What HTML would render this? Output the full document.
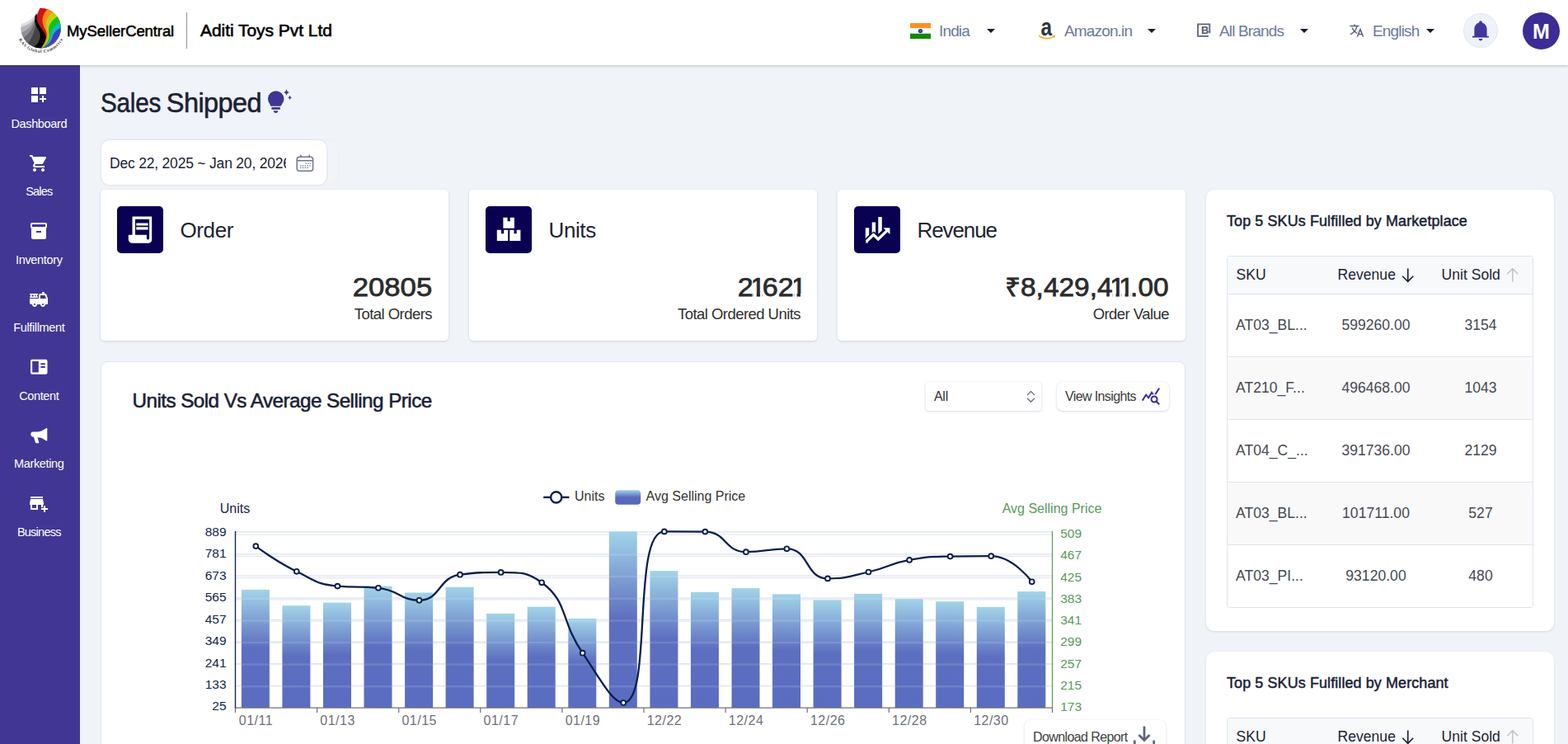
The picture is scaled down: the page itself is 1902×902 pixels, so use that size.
<!DOCTYPE html>
<html lang="en">
<head>
<meta charset="utf-8">
<title>Sales Shipped</title>
<style>
*{box-sizing:border-box;margin:0;padding:0}
html,body{width:1902px;height:902px;overflow:hidden;background:#f0f3f8;font-family:"Liberation Sans",sans-serif;color:#1a1f36}
.abs{position:absolute}
.t{position:absolute;white-space:nowrap;line-height:1}
#header{position:absolute;left:0;top:0;width:1902px;height:79px;background:#fff;box-shadow:0 1px 3px rgba(40,45,60,.26);z-index:5}
#sidebar{position:absolute;left:0;top:79px;width:97px;height:823px;background:#413693;z-index:4}
.nav{position:absolute;left:0;width:94.6px;text-align:center;color:#fff;font-size:14.5px;line-height:1;margin-top:-.7px;letter-spacing:-.35px;white-space:nowrap}
.card{position:absolute;background:#fff;border-radius:5px;box-shadow:0 1px 3px rgba(40,45,60,.16)}
.ibox{position:absolute;left:20px;top:20px;width:56px;height:57px;background:#0a0052;border-radius:5px}
.hsel{font-size:19px;color:#6c7a9c;letter-spacing:-.85px;top:28px !important}
.caret{position:absolute;top:35px;width:0;height:0;border-left:5px solid transparent;border-right:5px solid transparent;border-top:5.5px solid #171c2e}
.cval{font-size:31px;color:#2b2b2b;-webkit-text-stroke:.75px #2b2b2b;letter-spacing:0;transform:scaleX(1.12);transform-origin:right center}
.cval i{font-style:normal;display:inline-block;position:relative;width:10.400px;height:31px;overflow:hidden;vertical-align:top;text-indent:-3.300px;margin:0 -.2px}
.cval i::before,.cval i::after{content:"";position:absolute;bottom:1px;height:7px;background:#fff}
.cval i::before{left:0;width:3.700px}
.cval i::after{left:7.700px;width:3px}
.csub{font-size:18.500px;color:#2f2f2f;letter-spacing:-.55px}
.panel{position:absolute;background:#fff;border-radius:10px;box-shadow:0 1px 3px rgba(60,70,95,.16)}
.ptitle{font-size:18px;color:#1a1f36;-webkit-text-stroke:.5px #1a1f36;letter-spacing:.08px}
.tbl{position:absolute;border:1px solid #dde3ee;border-radius:4px;overflow:hidden;background:#fff}
.th{position:absolute;left:0;top:0;width:100%;height:45.500px;background:#f8f9fa;border-bottom:1px solid #dde1e8}
.thc{font-size:17.600px;color:#1a1f36;line-height:20px;margin-top:-2px}
.tr{position:absolute;left:0;width:100%;height:76px;border-bottom:1px solid #dfe2e8;background:#fff}
.tr.alt{background:#f9f9fa}
.tdc{font-size:17.600px;color:#464a52;line-height:20px;margin-top:-.1px}
.ccard{position:absolute;background:#fff;border-radius:8px;box-shadow:0 0 0 1px rgba(222,227,239,.9),0 0 2px rgba(140,155,190,.18)}
.selbox{background:#fff;box-shadow:0 1px 3px rgba(120,135,170,.3),0 0 1px rgba(120,135,170,.12)}
</style>
</head>
<body>
<div id="header">
<svg class="abs" style="left:15px;top:3px" width="70" height="70" viewBox="0 0 70 70">
<defs><clipPath id="lc"><circle cx="445" cy="400" r="312"/></clipPath>
<linearGradient id="lw" x1="0" y1="0" x2="1" y2="1"><stop offset="0" stop-color="#fff"/><stop offset="1" stop-color="#fff" stop-opacity="0"/></linearGradient></defs>
<g transform="scale(0.07761)"><g clip-path="url(#lc)">
<rect x="100" y="60" width="700" height="700" fill="#d2d3d9"/>
<path d="M345 205C330 280 290 340 100 400V760H500V205Z" fill="#b4b5bb"/>
<path d="M350 215C345 320 270 420 120 480V760H500V215Z" fill="#8f8f95"/>
<path d="M355 225C355 350 300 470 160 560V760H500V225Z" fill="#6a6a6f"/>
<path d="M360 235C370 380 350 500 240 640V760H500V235Z" fill="#444447"/>
<path d="M370 185C320 260 360 350 420 450C460 540 420 640 330 700L460 720L560 560L460 300L400 190Z" fill="#000"/>
<path d="M385 200C360 290 440 380 500 470C550 550 510 640 450 705L800 760V60H440Z" fill="#cd1417"/>
<path d="M545 105C460 200 450 300 500 400C550 480 560 560 455 705L800 760V60Z" fill="#ff8d17"/>
<path d="M625 155C530 240 500 330 545 430C575 520 560 600 460 706L800 760V100Z" fill="#bcd411"/>
<path d="M695 225C590 300 555 380 570 470C585 560 560 630 465 707L800 760V200Z" fill="#12c21c"/>
<path d="M745 305C650 360 610 430 600 500C595 580 560 650 470 708L800 760V300Z" fill="#12b9c4"/>
<path d="M760 395C690 420 640 480 625 540C605 610 560 670 475 709L800 760V390Z" fill="#3c40c6"/>
<path d="M740 535C680 590 620 640 560 680L480 712L800 760V530Z" fill="#a13cb4"/>
<path d="M100 60H445C400 140 360 200 300 250C250 290 190 320 100 345Z" fill="#fff"/>
<path d="M100 330C200 310 290 260 350 195L370 260C300 330 200 370 100 380Z" fill="url(#lw)" opacity=".6"/>
</g></g>
<path id="lt" d="M7.84 44.64A29.96 29.96 0 0 0 63.47 38.80" fill="none"/>
<text font-family="Liberation Serif,serif" font-size="5.400" font-weight="700" fill="#3a3a3a" letter-spacing=".62"><textPath href="#lt" startOffset="0">KAS Global Commerce</textPath></text>
</svg>
<div class="t" id="h-brand" style="left:81px;top:28.500px;font-size:18.5px;font-weight:400;-webkit-text-stroke:.55px #000;color:#000;letter-spacing:-.1px">MySellerCentral</div>
<div class="abs" style="left:226px;top:15px;width:1px;height:44px;background:#8b90a3"></div>
<div class="t" id="h-co" style="left:243px;top:26px;font-size:21px;font-weight:400;-webkit-text-stroke:.6px #000;color:#000;letter-spacing:-.05px">Aditi Toys Pvt Ltd</div>

<svg class="abs" style="left:1104px;top:28px" width="25" height="19" viewBox="0 0 25 19"><rect width="25" height="6.3" fill="#ff9122"/><rect y="6.3" width="25" height="6.4" fill="#fff"/><rect y="12.7" width="25" height="6.3" fill="#138808"/><circle cx="12.5" cy="9.5" r="2.6" fill="#2a2f9e"/><circle cx="12.5" cy="9.5" r="1" fill="#6a6fd0"/></svg>
<div class="t hsel" id="h-india" style="left:1139px;top:28px">India</div>
<div class="caret" style="left:1197px"></div>

<svg class="abs" style="left:1259px;top:26px" width="22" height="23" viewBox="0 0 22 23">
<text x="0" y="0" transform="translate(3.6 16.8) scale(.84 1)" font-family="Liberation Sans,sans-serif" font-weight="700" font-size="29" fill="#30333c">a</text>
<path d="M1.5 17.6 C6 21.6 14 21.8 19.6 18.2" fill="none" stroke="#f7a41c" stroke-width="1.3" stroke-linecap="round"/><path d="M17.6 17.2 L20.4 17 L19.6 19.8" fill="none" stroke="#f7a41c" stroke-width="1.1"/></svg>
<div class="t hsel" id="h-amz" style="left:1291px;top:28px">Amazon.in</div>
<div class="caret" style="left:1392px"></div>

<svg class="abs" style="left:1452px;top:28px" width="18" height="18" viewBox="0 0 18 18"><path d="M1.100 .5V16.700M.2 1.400H16.200M15.300 .5V11.400M.2 15.800H14" fill="none" stroke="#5d6479" stroke-width="1.800"/><path d="M13.600 10.600h3.400l-1.700 1.900z" fill="#5d6479"/><text x="5.100" y="13.100" font-family="Liberation Sans,sans-serif" font-weight="700" font-size="12.800" fill="#555b70">B</text></svg>
<div class="t hsel" id="h-brands" style="left:1479px;top:28px">All Brands</div>
<div class="caret" style="left:1577px"></div>

<svg class="abs" style="left:1637px;top:29px" width="18" height="16" viewBox="0 0 18 16"><g fill="none" stroke="#5d6479" stroke-width="1.5" stroke-linecap="round"><path d="M1 2.6 H11"/><path d="M6 1 V2.6"/><path d="M9 2.8 C8 7 5 10.5 1.6 12.4"/><path d="M3.4 5.2 C4.6 8 6.6 10 8.6 11.2"/><path d="M9.6 15 L13 6.6 L16.4 15"/><path d="M10.8 12.4 H15.2"/></g></svg>
<div class="t hsel" id="h-eng" style="left:1665px;top:28px">English</div>
<div class="caret" style="left:1730px"></div>

<div class="abs" style="left:1775px;top:16px;width:42px;height:42px;border-radius:50%;background:#eff2f9;border:1px solid #e2e5f3"></div>
<svg class="abs" style="left:1785px;top:24px" width="22" height="26" viewBox="0 0 22 26"><path d="M11 1.2 a1.9 1.9 0 0 1 1.9 1.9 v.5 C16.4 4.6 18.6 7.6 18.6 11.4 V19.8 H21 V21.6 H1 V19.8 H3.4 V11.4 C3.4 7.6 5.6 4.6 9.1 3.6 v-.5 A1.9 1.9 0 0 1 11 1.2Z" fill="#42379a"/><path d="M8.6 23 H13.4 A2.4 2.4 0 0 1 8.6 23Z" fill="#42379a"/></svg>
<div class="abs" style="left:1847px;top:15px;width:45px;height:45px;border-radius:50%;background:#3b2c96"></div>
<div class="t" id="h-m" style="left:1847px;width:45px;text-align:center;top:26px;font-size:25px;font-weight:700;color:#fff">M</div>
</div>
<div id="sidebar">
<svg class="abs" style="left:35px;top:24.0px" width="24" height="24" viewBox="0 0 24 24" fill="#fff"><path d="M3 3h8v8H3zm10 0h8v8h-8zM3 13h8v8H3zm15 0h-2v3h-3v2h3v3h2v-3h3v-2h-3z"/></svg>
<div class="nav" id="nav0" style="top:64.5px">Dashboard</div>
<svg class="abs" style="left:35px;top:106.5px" width="24" height="24" viewBox="0 0 24 24" fill="#fff"><path d="M7 18c-1.1 0-1.990.9-1.990 2S5.900 22 7 22s2-.9 2-2-.9-2-2-2zM1 2v2h2l3.600 7.590-1.350 2.450c-.16.28-.25.61-.25.96 0 1.100.9 2 2 2h12v-2H7.420c-.14 0-.25-.11-.25-.25l.03-.12.9-1.630h7.450c.75 0 1.410-.41 1.750-1.030l3.580-6.490c.08-.14.12-.31.12-.48 0-.55-.45-1-1-1H5.210l-.94-2H1zm16 16c-1.100 0-1.990.9-1.990 2s.89 2 1.990 2 2-.9 2-2-.9-2-2-2z"/></svg>
<div class="nav" id="nav1" style="top:147.0px;letter-spacing:-.8px">Sales</div>
<svg class="abs" style="left:35px;top:189.0px" width="24" height="24" viewBox="0 0 24 24" fill="#fff"><path d="M20 2H4c-1 0-2 .9-2 2v3.010c0 .72.43 1.340 1 1.690V20c0 1.100 1.100 2 2 2h14c.9 0 2-.9 2-2V8.700c.57-.35 1-.97 1-1.690V4c0-1.100-1-2-2-2zm-5 12H9v-2h6v2zm5-7H4V4h16v3z"/></svg>
<div class="nav" id="nav2" style="top:229.5px">Inventory</div>
<svg class="abs" style="left:35px;top:271.5px" width="24" height="24" viewBox="0 0 24 24" fill="#fff"><path d="M22.900 10.690l-1.440-4.320C21.180 5.550 20.420 5 19.560 5H19V4c0-.55-.45-1-1-1h-1c-.55 0-1 .45-1 1v1h-2c-1.100 0-2 .9-2 2v4H1v5c0 1.100.9 2 2 2h1c0 1.660 1.340 3 3 3s3-1.340 3-3h4c0 1.660 1.340 3 3 3s3-1.340 3-3h2c.55 0 1-.45 1-1v-5.680c0-.21-.03-.42-.1-.63zM7 19c-.55 0-1-.45-1-1s.45-1 1-1 1 .45 1 1-.45 1-1 1zm10 0c-.55 0-1-.45-1-1s.45-1 1-1 1 .45 1 1-.45 1-1 1zM14 11V7h5.560l1.330 4H14z"/><path d="M11 8.500h-1v-2h1V5H1v1.500h1v2H1V10h10V8.500zm-5.250 0H3.500v-2h2.250v2zm2.750 0H7.250v-2H8.500v2z"/></svg>
<div class="nav" id="nav3" style="top:312.0px">Fulfillment</div>
<svg class="abs" style="left:35px;top:354.0px" width="24" height="24" viewBox="0 0 24 24" fill="#fff"><path fill-rule="evenodd" d="M4 2.800h16.500a2 2 0 0 1 2 2v14a2 2 0 0 1-2 2H4a2 2 0 0 1-2-2v-14a2 2 0 0 1 2-2zM4.200 5v13.600h7.600V5zM14.400 7.200v2h5.400v-2zM14.400 11v2h5.400v-2z"/></svg>
<div class="nav" id="nav4" style="top:394.5px">Content</div>
<svg class="abs" style="left:35px;top:436.5px" width="24" height="24" viewBox="0 0 24 24" fill="#fff"><path d="M22.200 2.600c.5-.3 1.100 0 1.100.6v15.200c0 .6-.6.9-1.100.6l-6.200-3.700-5.300-.9 1.900 6.500c.2.600-.3 1.200-.9 1.200h-2.600c-.4 0-.8-.3-.9-.7l-2.300-7.500h-.9c-1.700 0-3-1.300-3-3v-.6c0-1.700 1.300-3 3-3h6.500l4.500-1z" transform="translate(.4 .6) scale(.94)"/></svg>
<div class="nav" id="nav5" style="top:477.0px">Marketing</div>
<svg class="abs" style="left:35px;top:519.0px" width="24" height="24" viewBox="0 0 24 24" fill="#fff"><path d="M15 17h2v-3h1v-2l-1-5H2l-1 5v2h1v6h9v-6h4v3zm-6 1H4v-4h5v4zM2 4h15v2H2z"/><path d="M20 18v-3h-2v3h-3v2h3v3h2v-3h3v-2z"/></svg>
<div class="nav" id="nav6" style="top:559.5px;letter-spacing:-.75px">Business</div>
</div>
<div id="main">
<div class="t med" id="title" style="left:121.500px;top:109px;font-size:32.5px;color:#1a1f36;letter-spacing:-1.120px;-webkit-text-stroke:.55px #1a1f36"><span style="display:inline-block;letter-spacing:-.3px;transform:scaleX(.915);transform-origin:left center;margin-right:-7.400px">Sales</span> <span style="letter-spacing:-.6px">Shipped</span></div>
<svg class="abs" style="left:322px;top:105px" width="36" height="36" viewBox="0 0 36 36" fill="#403594">
<path d="M5.160 21A9.700 9.700 0 1 1 20.240 21L18.400 23.700H6.450Z"/>
<rect x="7.400" y="24.900" width="10.500" height="2.900" rx=".3"/>
<path d="M9.900 29.200h5.300a2.650 2.700 0 0 1-5.300 0z"/>
<path d="M25.500 3.300Q26.100 6.400 28.900 7Q26.100 7.600 25.500 10.700Q24.900 7.600 22.100 7Q24.900 6.400 25.500 3.300Z"/>
<path d="M29.550 10.800Q30 13 32.100 13.350Q30 13.800 29.550 15.900Q29.100 13.800 27 13.350Q29.100 13 29.550 10.800Z"/>
</svg>

<div class="abs" style="left:123px;top:170px;width:287px;height:54px;border-radius:10px;background:#f1f4f9;box-shadow:0 0 1px rgba(180,190,215,.35)"></div>
<div class="abs" style="left:123px;top:170px;width:273px;height:54px;border-radius:9px;background:#fff;box-shadow:0 0 2px rgba(150,165,200,.55)"></div>
<div class="t" id="date" style="left:133px;top:188px;width:213.500px;overflow:hidden;font-size:17.5px;line-height:20px;color:#1a1f36;letter-spacing:-.2px">Dec 22, 2025 ~ Jan 20, 2026</div>
<svg class="abs" style="left:358px;top:186px" width="24" height="24" viewBox="0 0 24 24" fill="none" stroke="#6f7893" stroke-width="1.500"><rect x="2.200" y="4.200" width="19.400" height="17" rx="3"/><path d="M2.200 8.800h19.400M6.800 1.600v3M17.200 1.600v3" /><g stroke-width="1.300" stroke-dasharray="1.500 1.300"><path d="M12.400 12.200h6.500M6 14.800h13M6 17.400h10"/></g></svg>
<div class="card" style="left:122px;top:230px;width:422px;height:183px">
<div class="ibox"><svg class="abs" style="left:0;top:0" width="56" height="57" viewBox="0 0 56 57"><path fill-rule="evenodd" fill="#fff" d="M18.500 12.400H42.200V40.500a4.300 4.300 0 0 1-4.300 4.300H18.300a4.500 4.500 0 0 1-4.500-4.500V34.800H18.500zM22 15.700V34.800H35.900V39a1.600 1.600 0 0 0 3.200 0V15.700zM23.300 20.400H37.600V23.600H23.300zM23.300 25.300H37.600V28.500H23.300z"/></svg></div>
<div class="t" id="c-order-n" style="left:96.500px;top:36px;font-size:26px;color:#1f2333;letter-spacing:-.4px">Order</div>
<div class="t cval" id="c-order-v" style="right:19.500px;top:103px">20805</div>
<div class="t csub" id="c-order-s" style="right:20px;top:141.700px">Total Orders</div>
</div>
<div class="card" style="left:569px;top:230px;width:422px;height:183px">
<div class="ibox"><svg class="abs" style="left:0;top:0" width="56" height="57" viewBox="0 0 56 57" fill="#fff"><path d="M21.400 13.800h5.200v4.400h3.200v-4.400h5.100v12.900H21.400zM13.800 28.800h5.200v4.400h3.200v-4.400h5v13.100H13.800zM29.300 28.800h5.200v4.400h3.200v-4.400h4.700v13.100H29.300z"/></svg></div>
<div class="t" id="c-units-n" style="left:96.500px;top:36px;font-size:26px;color:#1f2333;letter-spacing:-.4px">Units</div>
<div class="t cval" id="c-units-v" style="right:17.500px;top:103px;transform:scaleX(1.100)">2<i>1</i>62<i>1</i></div>
<div class="t csub" id="c-units-s" style="right:20px;top:141.700px">Total Ordered Units</div>
</div>
<div class="card" style="left:1016px;top:230px;width:422px;height:183px">
<div class="ibox"><svg class="abs" style="left:0;top:0" width="56" height="57" viewBox="0 0 56 57" fill="#fff"><path d="M13.800 26.300h4.400v8.500l-4.400 4.300zM21.700 19.500h4.400v13.100l-2.300-2.100-2.100 1.900zM29.300 13h4.500v16.500l-4.500 4.300z"/><path d="M15 42.800L23.500 34.500l5.800 5.500 11-10.600" fill="none" stroke="#fff" stroke-width="3.400"/><path d="M35.400 26.300h8.100v7.800z"/><path d="M13.900 44.400h3.500l-2.500-2.700z"/></svg></div>
<div class="t" id="c-rev-n" style="left:96.500px;top:36px;font-size:26px;color:#1f2333;letter-spacing:-1.1px">Revenue</div>
<div class="t cval" id="c-rev-v" style="right:20px;top:103px;transform:scaleX(1.078)">₹8,429,4<i>1</i><i>1</i>.00</div>
<div class="t csub" id="c-rev-s" style="right:20px;top:141.700px">Order Value</div>
</div>
<div class="ccard" style="left:123px;top:439px;width:1314px;height:480px">
<svg class="abs" id="chart" style="left:0;top:0" width="1316" height="464" viewBox="0 0 1316 464" font-family="Liberation Sans, sans-serif">
<defs><linearGradient id="bg" x1="0" y1="0" x2="0" y2="1"><stop offset="0" stop-color="#9fd3e8"/><stop offset=".5" stop-color="#576abe"/><stop offset="1" stop-color="#5568be"/></linearGradient></defs>
<path d="M162.5 206.1H1153.5M162.5 232.7H1153.5M162.5 259.3H1153.5M162.5 285.9H1153.5M162.5 312.6H1153.5M162.5 339.2H1153.5M162.5 365.8H1153.5M162.5 392.4H1153.5" stroke="#dfe5f1" stroke-width="1.500" fill="none"/>
<path d="M162.5 209.2H1153.5M162.5 235.4H1153.5M162.5 261.7H1153.5M162.5 287.9H1153.5M162.5 314.1H1153.5M162.5 340.3H1153.5M162.5 366.5H1153.5M162.5 392.8H1153.5" stroke="#e3e8f3" stroke-width="1.200" fill="none"/>
<rect x="169.9" y="275.9" width="34" height="143.1" fill="url(#bg)" opacity=".97"/>
<rect x="219.4" y="295.2" width="34" height="123.8" fill="url(#bg)" opacity=".97"/>
<rect x="269.0" y="291.6" width="34" height="127.4" fill="url(#bg)" opacity=".97"/>
<rect x="318.5" y="271.6" width="34" height="147.4" fill="url(#bg)" opacity=".97"/>
<rect x="368.1" y="279.5" width="34" height="139.5" fill="url(#bg)" opacity=".97"/>
<rect x="417.6" y="272.7" width="34" height="146.3" fill="url(#bg)" opacity=".97"/>
<rect x="467.2" y="304.8" width="34" height="114.2" fill="url(#bg)" opacity=".97"/>
<rect x="516.7" y="296.6" width="34" height="122.4" fill="url(#bg)" opacity=".97"/>
<rect x="566.3" y="310.9" width="34" height="108.1" fill="url(#bg)" opacity=".97"/>
<rect x="615.8" y="205.4" width="34" height="213.6" fill="url(#bg)" opacity=".97"/>
<rect x="665.4" y="253.1" width="34" height="165.9" fill="url(#bg)" opacity=".97"/>
<rect x="714.9" y="278.8" width="34" height="140.2" fill="url(#bg)" opacity=".97"/>
<rect x="764.5" y="274.1" width="34" height="144.9" fill="url(#bg)" opacity=".97"/>
<rect x="814.0" y="281.3" width="34" height="137.7" fill="url(#bg)" opacity=".97"/>
<rect x="863.6" y="288.4" width="34" height="130.6" fill="url(#bg)" opacity=".97"/>
<rect x="913.1" y="280.9" width="34" height="138.1" fill="url(#bg)" opacity=".97"/>
<rect x="962.7" y="287.0" width="34" height="132.0" fill="url(#bg)" opacity=".97"/>
<rect x="1012.2" y="290.2" width="34" height="128.8" fill="url(#bg)" opacity=".97"/>
<rect x="1061.8" y="297.0" width="34" height="122.0" fill="url(#bg)" opacity=".97"/>
<rect x="1111.3" y="278.1" width="34" height="140.9" fill="url(#bg)" opacity=".97"/>
<path d="M162.5 233.5H1153.5M162.5 260.1H1153.5M162.5 286.7H1153.5M162.5 313.4H1153.5M162.5 340.0H1153.5M162.5 366.6H1153.5M162.5 393.2H1153.5" stroke="#ffffff" stroke-opacity=".13" stroke-width="2.500" fill="none"/>
<path d="M162.5 419.2H1153.5" stroke="#6e7079" stroke-width="1.300" fill="none"/>
<path d="M162.5 419.0v6M261.6 419.0v6M360.7 419.0v6M459.8 419.0v6M558.9 419.0v6M658.0 419.0v6M757.1 419.0v6M856.2 419.0v6M955.3 419.0v6M1054.4 419.0v6M1153.5 419.0v6" stroke="#6e7079" stroke-width="1.200" fill="none"/>
<path d="M162.5 205.0V419.5" stroke="#14254f" stroke-width="1.400" fill="none"/>
<path d="M1153.5 205.0V419.0" stroke="#5f9e5f" stroke-width="1.300" fill="none"/>
<g font-size="15.500" fill="#14254f" text-anchor="end">
<text x="151.6" y="211.0">889</text>
<text x="151.6" y="237.4">781</text>
<text x="151.6" y="263.8">673</text>
<text x="151.6" y="290.2">565</text>
<text x="151.6" y="316.7">457</text>
<text x="151.6" y="343.1">349</text>
<text x="151.6" y="369.5">241</text>
<text x="151.6" y="395.9">133</text>
<text x="151.6" y="422.3">25</text>
</g>
<g font-size="15.500" fill="#5a9a5a">
<text x="1163.2" y="213.2">509</text>
<text x="1163.2" y="239.4">467</text>
<text x="1163.2" y="265.7">425</text>
<text x="1163.2" y="291.9">383</text>
<text x="1163.2" y="318.2">341</text>
<text x="1163.2" y="344.4">299</text>
<text x="1163.2" y="370.6">257</text>
<text x="1163.2" y="396.9">215</text>
<text x="1163.2" y="423.1">173</text>
</g>
<g font-size="16" fill="#6e7079" text-anchor="middle" letter-spacing=".5">
<text x="187.5" y="440.2">01/11</text>
<text x="286.6" y="440.2">01/13</text>
<text x="385.7" y="440.2">01/15</text>
<text x="484.8" y="440.2">01/17</text>
<text x="583.9" y="440.2">01/19</text>
<text x="683.0" y="440.2">12/22</text>
<text x="782.1" y="440.2">12/24</text>
<text x="881.2" y="440.2">12/26</text>
<text x="980.3" y="440.2">12/28</text>
<text x="1079.4" y="440.2">12/30</text>
</g>
<text x="162.0" y="183.1" font-size="16" fill="#14254f" text-anchor="middle">Units</text>
<text x="1153.0" y="183.1" font-size="16" fill="#5a9a5a" text-anchor="middle">Avg Selling Price</text>
<path d="M536.2 163.9H567.4" stroke="#0b1f4d" stroke-width="2.400"/>
<circle cx="551.7" cy="163.9" r="6.600" fill="#fff" stroke="#0b1f4d" stroke-width="2.400"/>
<text x="574.0" y="168.0" font-size="16" fill="#333">Units</text>
<rect x="623.2" y="155.3" width="31" height="17.400" rx="4" fill="url(#bg)"/>
<text x="660.6" y="168.0" font-size="16" fill="#333">Avg Selling Price</text>
<path d="M187.3 223.1C187.3 223.1 210.8 241.1 236.8 253.8C260.3 265.3 260.9 269.3 286.4 271.6C310.4 273.8 311.7 271.6 335.9 273.8C361.2 276.1 362.2 288.8 385.5 288.8C411.8 288.8 408.2 261.0 435.0 257.7C457.8 254.9 460.2 254.9 484.6 254.9C509.7 254.9 517.2 254.9 534.1 267.3C566.8 291.3 556.0 312.0 583.7 352.7C605.6 384.9 620.0 413.0 633.2 413.0C669.5 413.0 642.6 205.4 682.8 205.4C692.1 205.4 708.9 205.4 732.3 205.6C758.5 205.8 755.8 230.2 781.9 230.2C805.3 230.2 809.2 226.3 831.4 226.3C858.8 226.3 853.7 262.4 881.0 262.4C903.3 262.4 906.1 260.0 930.5 254.5C955.7 248.8 954.8 244.4 980.1 239.9C1004.4 235.6 1004.8 236.0 1029.6 235.6C1054.4 235.2 1056.5 235.2 1079.2 235.2C1106.0 235.2 1128.7 266.3 1128.7 266.3" fill="none" stroke="#0b1f4d" stroke-width="2.300" stroke-linejoin="round"/>
<circle cx="187.3" cy="223.1" r="2.900" fill="#fff" stroke="#0b1f4d" stroke-width="1.900"/>
<circle cx="236.8" cy="253.8" r="2.900" fill="#fff" stroke="#0b1f4d" stroke-width="1.900"/>
<circle cx="286.4" cy="271.6" r="2.900" fill="#fff" stroke="#0b1f4d" stroke-width="1.900"/>
<circle cx="335.9" cy="273.8" r="2.900" fill="#fff" stroke="#0b1f4d" stroke-width="1.900"/>
<circle cx="385.5" cy="288.8" r="2.900" fill="#fff" stroke="#0b1f4d" stroke-width="1.900"/>
<circle cx="435.0" cy="257.7" r="2.900" fill="#fff" stroke="#0b1f4d" stroke-width="1.900"/>
<circle cx="484.6" cy="254.9" r="2.900" fill="#fff" stroke="#0b1f4d" stroke-width="1.900"/>
<circle cx="534.1" cy="267.3" r="2.900" fill="#fff" stroke="#0b1f4d" stroke-width="1.900"/>
<circle cx="583.7" cy="352.7" r="2.900" fill="#fff" stroke="#0b1f4d" stroke-width="1.900"/>
<circle cx="633.2" cy="413.0" r="2.900" fill="#fff" stroke="#0b1f4d" stroke-width="1.900"/>
<circle cx="682.8" cy="205.4" r="2.900" fill="#fff" stroke="#0b1f4d" stroke-width="1.900"/>
<circle cx="732.3" cy="205.6" r="2.900" fill="#fff" stroke="#0b1f4d" stroke-width="1.900"/>
<circle cx="781.9" cy="230.2" r="2.900" fill="#fff" stroke="#0b1f4d" stroke-width="1.900"/>
<circle cx="831.4" cy="226.3" r="2.900" fill="#fff" stroke="#0b1f4d" stroke-width="1.900"/>
<circle cx="881.0" cy="262.4" r="2.900" fill="#fff" stroke="#0b1f4d" stroke-width="1.900"/>
<circle cx="930.5" cy="254.5" r="2.900" fill="#fff" stroke="#0b1f4d" stroke-width="1.900"/>
<circle cx="980.1" cy="239.9" r="2.900" fill="#fff" stroke="#0b1f4d" stroke-width="1.900"/>
<circle cx="1029.6" cy="235.6" r="2.900" fill="#fff" stroke="#0b1f4d" stroke-width="1.900"/>
<circle cx="1079.2" cy="235.2" r="2.900" fill="#fff" stroke="#0b1f4d" stroke-width="1.900"/>
<circle cx="1128.7" cy="266.3" r="2.900" fill="#fff" stroke="#0b1f4d" stroke-width="1.900"/>
</svg>
<div class="t" id="ctitle" style="left:37.5px;top:35px;font-size:24.300px;color:#1a1f36;-webkit-text-stroke:.55px #1a1f36;letter-spacing:-.57px">Units Sold Vs Average Selling Price</div>
<div class="abs selbox" style="left:1000px;top:23.5px;width:140px;height:35.500px;border-radius:4px"></div>
<div class="t" id="sel-all" style="left:1010px;top:33.5px;font-size:16px;color:#333;letter-spacing:-.3px">All</div>
<svg class="abs" style="left:1121px;top:33px" width="13" height="18" viewBox="0 0 13 18" fill="none" stroke="#6b7080" stroke-width="1.400" stroke-linecap="round" stroke-linejoin="round"><path d="M2.500 6.400l4-4 4 4M2.500 11.200l4 4 4-4"/></svg>
<div class="abs selbox" style="left:1159px;top:24px;width:136px;height:35px;border-radius:7px"></div>
<div class="t" id="vi" style="left:1169px;top:33.5px;font-size:16px;color:#3a3a3a;letter-spacing:-.62px">View Insights</div>
<svg class="abs" style="left:1260.5px;top:29.4px" width="24" height="24" viewBox="0 0 24 24" fill="#3b2c96"><path d="M19.880 18.470c.44-.7.7-1.510.7-2.390 0-2.490-2.010-4.500-4.500-4.500s-4.500 2.010-4.500 4.500 2.010 4.500 4.490 4.500c.88 0 1.700-.26 2.390-.7L21.580 23 23 21.580l-3.120-3.110zm-3.800.11c-1.380 0-2.500-1.120-2.500-2.500s1.120-2.500 2.500-2.500 2.500 1.120 2.500 2.500-1.120 2.500-2.500 2.500zm-.36-8.500c-.74.02-1.450.18-2.100.45l-.55-.83-3.800 6.180-3.010-3.520-3.630 5.810L1 17l5-8 3 3.500L13 6l2.720 4.080zm2.590.5c-.64-.28-1.330-.45-2.050-.49L21.380 2 23 3.180l-4.690 7.400z"/></svg>
<div class="abs selbox" style="left:1119.5px;top:434px;width:171px;height:50px;border-radius:7px"></div>
<div class="t" id="dl" style="left:1130px;top:447.3px;font-size:16px;color:#404040;letter-spacing:-.6px">Download Report</div>
<svg class="abs" style="left:1251px;top:440px" width="28" height="28" viewBox="0 0 28 28" fill="none" stroke="#5d6479" stroke-width="2.700"><path d="M14 1.500v16.500M7.500 12l6.500 6.500 6.500-6.500M2.300 18.500v8M25.700 18.500v8"/></svg>
</div>
<!--endccard-->
<div class="panel" style="left:1463px;top:230px;width:422px;height:535px">
<div class="t ptitle" id="p1-t" style="left:25px;top:29px">Top 5 SKUs Fulfilled by Marketplace</div>
<div class="tbl" style="left:25px;top:80px;width:372px;height:427px">
<div class="th"><div class="t thc" style="left:10.500px;top:14px">SKU</div><div class="t thc" style="left:133.500px;top:14px">Revenue</div><svg class="abs" style="left:210px;top:13px" width="18" height="20" viewBox="0 0 18 20" fill="none" stroke="#1a1f36" stroke-width="1.600"><path d="M8.800 1.500v15.500M2.300 10.800l6.500 6.500 6.500-6.500"/></svg><div class="t thc" style="left:259.500px;top:14px">Unit Sold</div><svg class="abs" style="left:337px;top:13px" width="18" height="20" viewBox="0 0 18 20" fill="none" stroke="#c3c5c8" stroke-width="1.600"><path d="M8.800 17.500V2M2.300 8.200l6.500-6.500 6.500 6.500"/></svg></div>
<div class="tr" style="top:45.5px"><div class="t tdc" style="left:10px;top:28px">AT03_BL...</div><div class="t tdc" style="left:100px;width:160px;text-align:center;top:28px">599260.00</div><div class="t tdc" style="left:247px;width:120px;text-align:center;top:28px">3154</div></div>
<div class="tr alt" style="top:121.5px"><div class="t tdc" style="left:10px;top:28px">AT210_F...</div><div class="t tdc" style="left:100px;width:160px;text-align:center;top:28px">496468.00</div><div class="t tdc" style="left:247px;width:120px;text-align:center;top:28px">1043</div></div>
<div class="tr" style="top:197.5px"><div class="t tdc" style="left:10px;top:28px">AT04_C_...</div><div class="t tdc" style="left:100px;width:160px;text-align:center;top:28px">391736.00</div><div class="t tdc" style="left:247px;width:120px;text-align:center;top:28px">2129</div></div>
<div class="tr alt" style="top:273.5px"><div class="t tdc" style="left:10px;top:28px">AT03_BL...</div><div class="t tdc" style="left:100px;width:160px;text-align:center;top:28px">101711.00</div><div class="t tdc" style="left:247px;width:120px;text-align:center;top:28px">527</div></div>
<div class="tr" style="top:349.5px"><div class="t tdc" style="left:10px;top:28px">AT03_PI...</div><div class="t tdc" style="left:100px;width:160px;text-align:center;top:28px">93120.00</div><div class="t tdc" style="left:247px;width:120px;text-align:center;top:28px">480</div></div>
</div>
</div>
<div class="panel" style="left:1463px;top:790px;width:422px;height:535px">
<div class="t ptitle" id="p2-t" style="left:25px;top:29px">Top 5 SKUs Fulfilled by Merchant</div>
<div class="tbl" style="left:25px;top:80px;width:372px;height:427px">
<div class="th"><div class="t thc" style="left:10.500px;top:14px">SKU</div><div class="t thc" style="left:133.500px;top:14px">Revenue</div><svg class="abs" style="left:210px;top:13px" width="18" height="20" viewBox="0 0 18 20" fill="none" stroke="#1a1f36" stroke-width="1.600"><path d="M8.800 1.500v15.500M2.300 10.800l6.500 6.500 6.500-6.500"/></svg><div class="t thc" style="left:259.500px;top:14px">Unit Sold</div><svg class="abs" style="left:337px;top:13px" width="18" height="20" viewBox="0 0 18 20" fill="none" stroke="#c3c5c8" stroke-width="1.600"><path d="M8.800 17.500V2M2.300 8.200l6.500-6.500 6.500 6.500"/></svg></div>
<div class="tr" style="top:45.5px"><div class="t tdc" style="left:10px;top:28px">AT03_BL...</div><div class="t tdc" style="left:100px;width:160px;text-align:center;top:28px">599260.00</div><div class="t tdc" style="left:247px;width:120px;text-align:center;top:28px">3154</div></div>
<div class="tr alt" style="top:121.5px"><div class="t tdc" style="left:10px;top:28px">AT210_F...</div><div class="t tdc" style="left:100px;width:160px;text-align:center;top:28px">496468.00</div><div class="t tdc" style="left:247px;width:120px;text-align:center;top:28px">1043</div></div>
<div class="tr" style="top:197.5px"><div class="t tdc" style="left:10px;top:28px">AT04_C_...</div><div class="t tdc" style="left:100px;width:160px;text-align:center;top:28px">391736.00</div><div class="t tdc" style="left:247px;width:120px;text-align:center;top:28px">2129</div></div>
<div class="tr alt" style="top:273.5px"><div class="t tdc" style="left:10px;top:28px">AT03_BL...</div><div class="t tdc" style="left:100px;width:160px;text-align:center;top:28px">101711.00</div><div class="t tdc" style="left:247px;width:120px;text-align:center;top:28px">527</div></div>
<div class="tr" style="top:349.5px"><div class="t tdc" style="left:10px;top:28px">AT03_PI...</div><div class="t tdc" style="left:100px;width:160px;text-align:center;top:28px">93120.00</div><div class="t tdc" style="left:247px;width:120px;text-align:center;top:28px">480</div></div>
</div>
</div>
</div>
</body>
</html>
